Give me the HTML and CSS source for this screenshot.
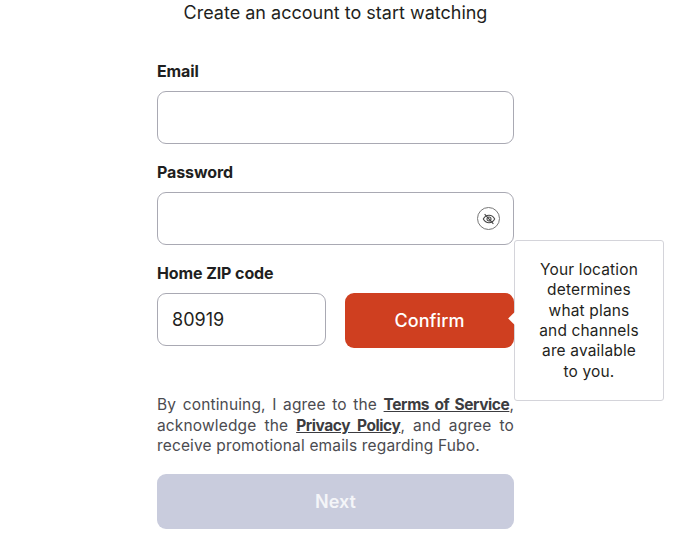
FILE: index.html
```html
<!DOCTYPE html>
<html lang="en">
<head>
    <meta charset="UTF-8">
    <meta name="viewport" content="width=device-width, initial-scale=1.0">
    <title>Create an account</title>
    <link rel="stylesheet" href="styles.css">
</head>
<body>

<div class="container">
    <h3>Create an account to start watching</h3>

    <label for="email">Email</label>
    <input type="email" id="email">

    <label for="password">Password</label>
    <div class="password-box">
        <input type="password" id="password">
        <button class="eye-button" aria-label="Show password">
            <svg width="14" height="14" viewBox="0 0 16 16" fill="none" stroke="#444" stroke-width="1.2">
                <path d="M1.5 8C3 5.2 5.3 3.8 8 3.8S13 5.2 14.5 8C13 10.8 10.700 12.200 8 12.200S3 10.800 1.500 8Z"/>
                <circle cx="8" cy="8" r="2.300"/>
                <path d="M3 2.500L13 13.500"/>
            </svg>
        </button>
    </div>

    <label for="zip">Home ZIP code</label>
    <div class="zip-row">
        <input type="text" id="zip" value="80919">
        <button class="confirm-button">Confirm</button>
        <div class="tooltip">Your location determines what plans and channels are available to you.</div>
    </div>

    <p class="terms">By continuing, I agree to the <a href="#">Terms of Service</a>, acknowledge the <a href="#">Privacy Policy</a>, and agree to receive promotional emails regarding Fubo.</p>

    <button class="next-button" disabled>Next</button>
</div>

</body>
</html>
```

FILE: styles.css
```css
body {
    font-family: Inter, "Noto Sans", sans-serif;
    margin: 0;
    background-color: #ffffff;
    color: #1f1f21;
}
.container {
    width: 357px;
    margin-left: 157px;
}
h3 {
    margin: 0 -20px 37px;
    padding-top: 2px;
    font-size: 18px;
    line-height: 22px;
    font-weight: 400;
    text-align: center;
}
label {
    display: block;
    font-size: 16px;
    line-height: 20px;
    font-weight: 700;
    letter-spacing: -0.1px;
    margin-bottom: 10px;
}
input {
    display: block;
    width: 100%;
    height: 53px;
    padding: 0 14px;
    margin-bottom: 18px;
    border: 1px solid #a9a9b3;
    border-radius: 9px;
    font-family: inherit;
    font-size: 18px;
    color: #1f1f21;
    box-sizing: border-box;
}
.password-box {
    position: relative;
}
.eye-button {
    position: absolute;
    top: 15px;
    right: 14px;
    display: flex;
    align-items: center;
    justify-content: center;
    width: 23px;
    height: 23px;
    padding: 0;
    background: #ffffff;
    border: 1px solid #777;
    border-radius: 50%;
}
.zip-row {
    position: relative;
    display: flex;
    align-items: flex-start;
    gap: 19px;
}
.zip-row input {
    width: 169px;
    margin-bottom: 0;
}
.confirm-button {
    position: relative;
    width: 169px;
    height: 55px;
    background-color: #cf3f20;
    color: #ffffff;
    border: none;
    border-radius: 9px;
    font-family: inherit;
    font-size: 18px;
    font-weight: 500;
    letter-spacing: 0.1px;
}
.tooltip {
    position: absolute;
    top: -53px;
    left: 357px;
    width: 150px;
    height: 161px;
    padding: 1px 20px 0;
    display: flex;
    align-items: center;
    text-align: center;
    background-color: #ffffff;
    border: 1px solid #d4d4da;
    border-radius: 3px;
    font-size: 15.500px;
    line-height: 20.300px;
    letter-spacing: 0.15px;
    box-sizing: border-box;
}
.tooltip::before {
    content: "";
    position: absolute;
    top: 73px;
    left: -5px;
    width: 9px;
    height: 9px;
    background-color: #ffffff;
    transform: rotate(45deg);
}
.terms {
    margin: 47px 0 17px;
    font-size: 15.500px;
    line-height: 20.500px;
    letter-spacing: 0.15px;
    text-align: justify;
    color: #4b4b50;
}
.terms a {
    color: #3c3c40;
    font-weight: 700;
    letter-spacing: -0.42px;
}
.next-button {
    display: block;
    width: 100%;
    height: 55px;
    background-color: #c9ccdd;
    color: #f4f5f8;
    border: none;
    border-radius: 9px;
    font-family: inherit;
    font-size: 18px;
    font-weight: 600;
}
```
